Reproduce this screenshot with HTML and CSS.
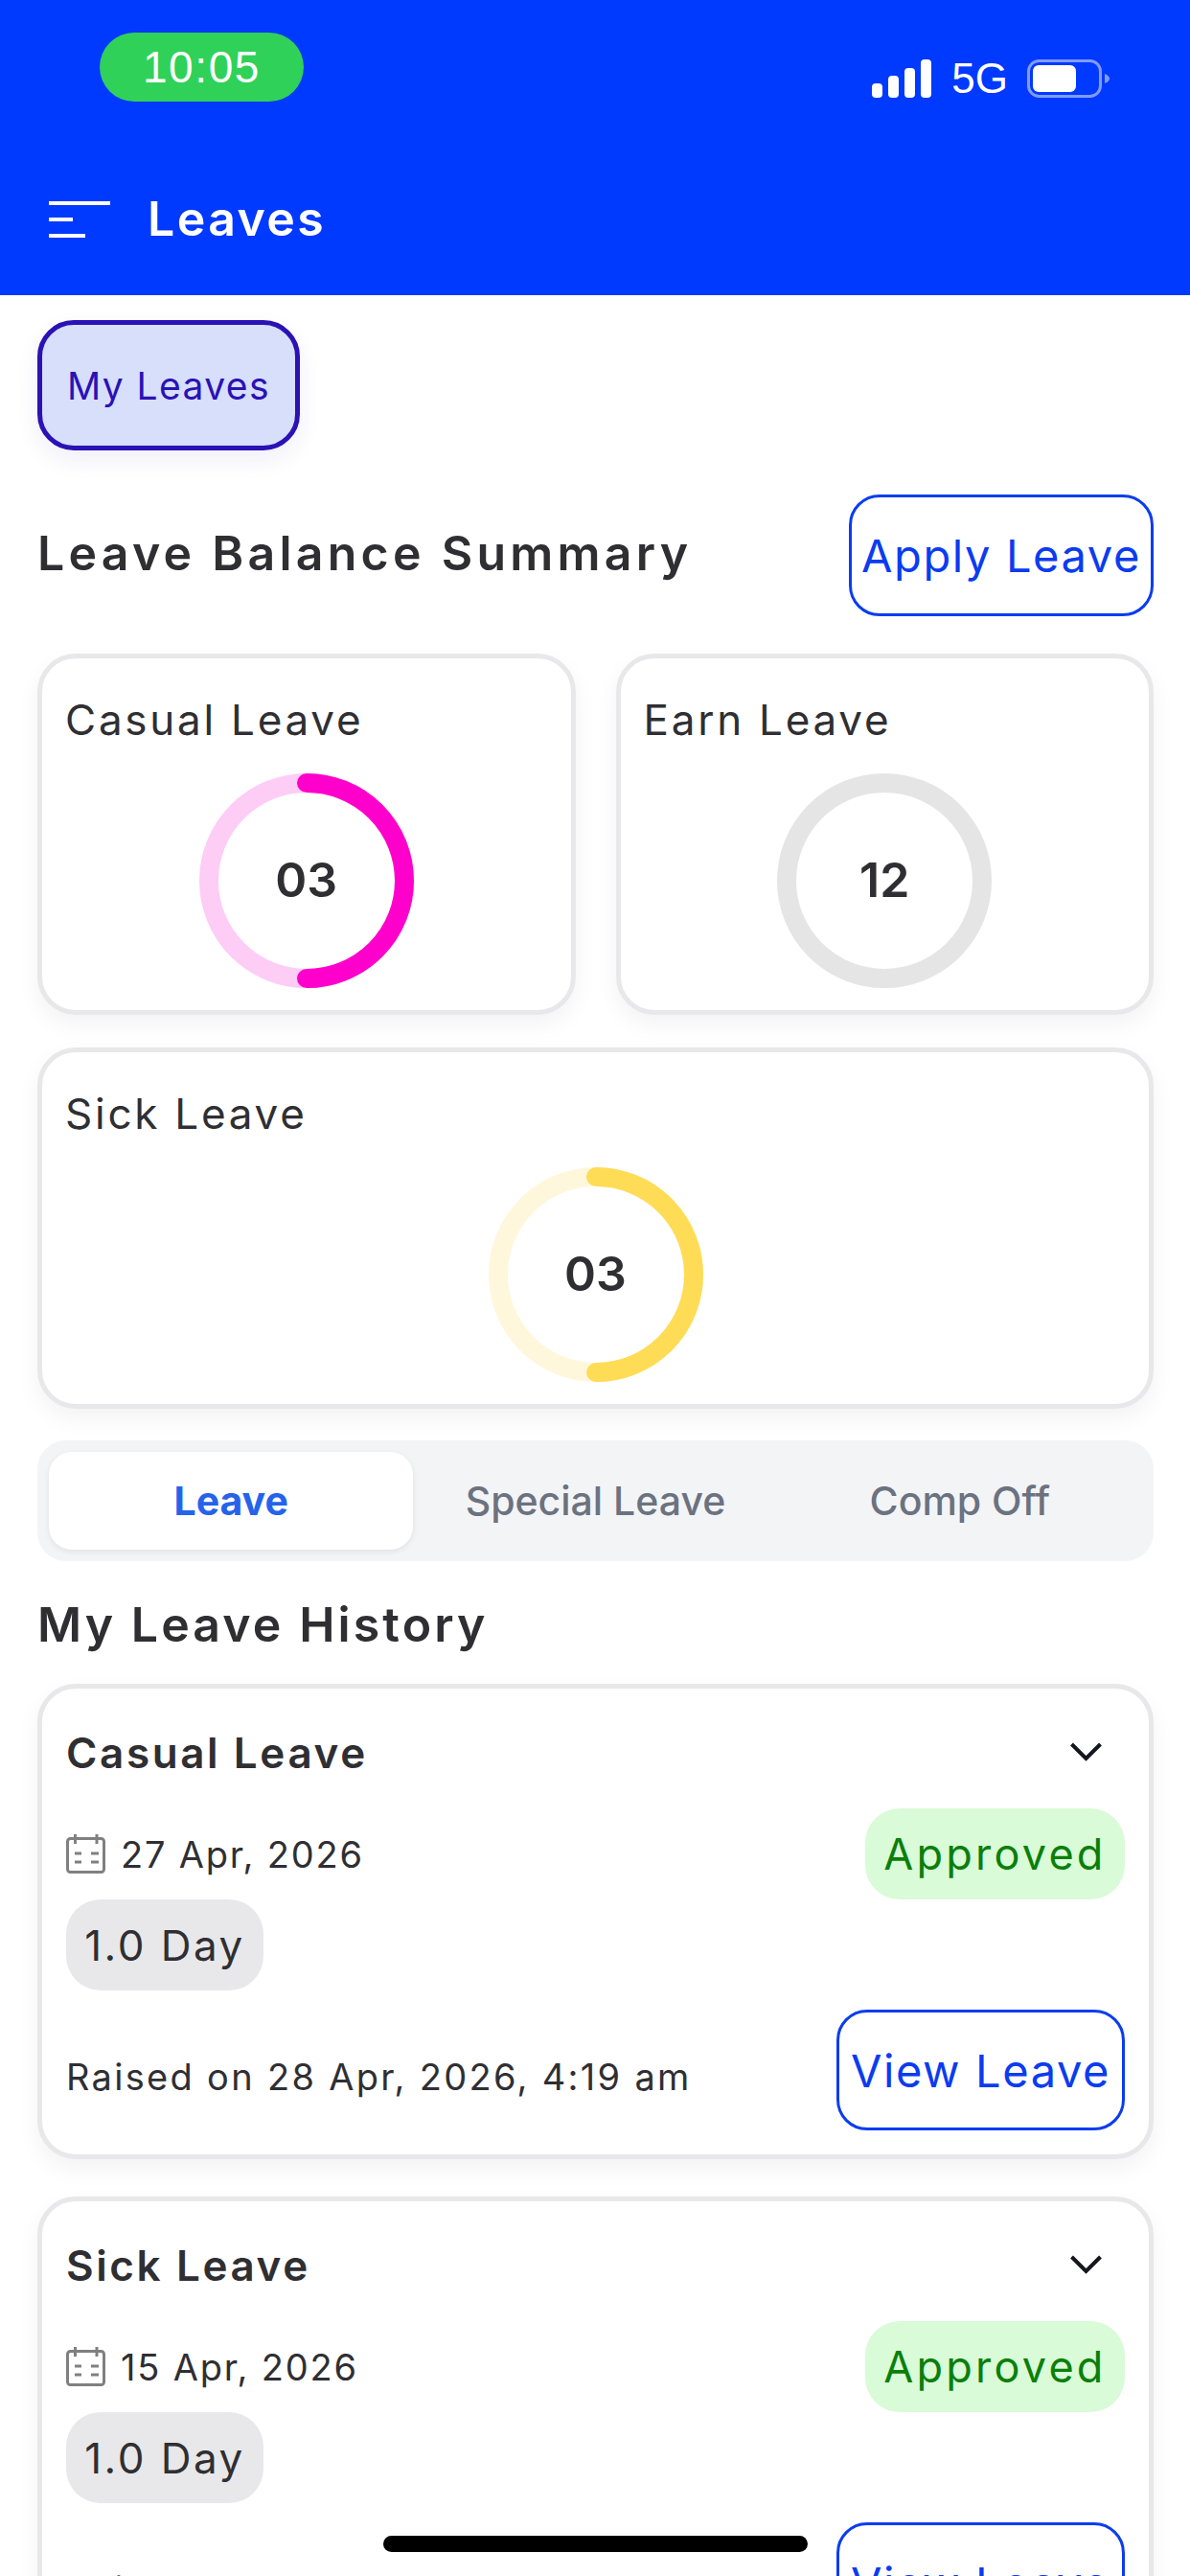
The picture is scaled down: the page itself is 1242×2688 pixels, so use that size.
FILE: index.html
```html
<!DOCTYPE html>
<html lang="en">
<head>
<meta charset="UTF-8">
<meta name="viewport" content="width=device-width, initial-scale=1.0">
<title>Leaves</title>
<link rel="stylesheet" href="styles.css">
</head>
<body>
<div class="screen">

    <header class="topbar">
        <div class="status">
            <span class="time">10:05</span>
            <div class="status-right">
                <svg class="signal" width="62" height="40" viewBox="0 0 62 40">
                    <rect x="0" y="25" width="11" height="15" rx="4"/>
                    <rect x="17" y="17" width="11" height="23" rx="4"/>
                    <rect x="34" y="9" width="11" height="31" rx="4"/>
                    <rect x="51" y="0" width="11" height="40" rx="4"/>
                </svg>
                <span class="net">5G</span>
                <svg class="battery" width="86" height="40" viewBox="0 0 86 40">
                    <rect x="1.5" y="1.5" width="75" height="37" rx="11" fill="none" stroke="#fff" stroke-opacity=".5" stroke-width="3"/>
                    <rect x="6" y="6" width="45" height="28" rx="6" fill="#fff"/>
                    <path d="M81 15c3 1 5 3 5 5s-2 4-5 5z" fill="#fff" fill-opacity=".5"/>
                </svg>
            </div>
        </div>
        <div class="titlebar">
            <svg class="menu" width="64" height="38" viewBox="0 0 64 38">
                <rect x="0" y="0" width="64" height="4"/>
                <rect x="0" y="17" width="25" height="4"/>
                <rect x="0" y="34" width="38" height="4"/>
            </svg>
            <h1>Leaves</h1>
        </div>
    </header>

    <main class="content">
        <div class="subtabs">
            <button class="subtab">My Leaves</button>
        </div>

        <div class="summary-head">
            <h2 class="summary-title">Leave Balance Summary</h2>
            <a class="outline-btn apply">Apply Leave</a>
        </div>

        <div class="balance-grid">
            <section class="balance-card">
                <div class="balance-name">Casual Leave</div>
                <div class="donut">
                    <svg width="224" height="224" viewBox="0 0 224 224">
                        <circle cx="112" cy="112" r="102" fill="none" stroke="#fdcdf6" stroke-width="20"/>
                        <path d="M112 10a102 102 0 0 1 0 204" fill="none" stroke="#ff00cc" stroke-width="20" stroke-linecap="round"/>
                    </svg>
                    <span class="donut-num">03</span>
                </div>
            </section>
            <section class="balance-card">
                <div class="balance-name">Earn Leave</div>
                <div class="donut">
                    <svg width="224" height="224" viewBox="0 0 224 224">
                        <circle cx="112" cy="112" r="102" fill="none" stroke="#e5e5e5" stroke-width="20"/>
                    </svg>
                    <span class="donut-num">12</span>
                </div>
            </section>
            <section class="balance-card wide">
                <div class="balance-name">Sick Leave</div>
                <div class="donut">
                    <svg width="224" height="224" viewBox="0 0 224 224">
                        <circle cx="112" cy="112" r="102" fill="none" stroke="#fff7dc" stroke-width="20"/>
                        <path d="M112 10a102 102 0 0 1 0 204" fill="none" stroke="#ffdc55" stroke-width="20" stroke-linecap="round"/>
                    </svg>
                    <span class="donut-num">03</span>
                </div>
            </section>
        </div>

        <div class="segment">
            <div class="segment-item active">Leave</div>
            <div class="segment-item">Special Leave</div>
            <div class="segment-item">Comp Off</div>
        </div>

        <h2 class="history-title">My Leave History</h2>

        <section class="leave-card">
            <div class="leave-top">
                <div class="leave-type">Casual Leave</div>
                <svg class="chevron" width="33" height="20" viewBox="0 0 33 20"><path d="M1.5 2l15 15 15-15"/></svg>
            </div>
            <div class="leave-row">
                <div class="leave-date">
                    <svg class="cal" width="41" height="41" viewBox="0 0 41 41">
                        <rect x="1.5" y="4.5" width="38" height="35" rx="3"/>
                        <path d="M9.5 0v10M32 0v10M9 20h7M26 20h8M9 29h7M26 29h8"/>
                    </svg>
                    <span>27 Apr, 2026</span>
                </div>
                <span class="status-pill">Approved</span>
            </div>
            <div class="day-pill">1.0 Day</div>
            <div class="leave-foot">
                <span class="raised">Raised on 28 Apr, 2026, 4:19 am</span>
                <a class="outline-btn view">View Leave</a>
            </div>
        </section>

        <section class="leave-card">
            <div class="leave-top">
                <div class="leave-type">Sick Leave</div>
                <svg class="chevron" width="33" height="20" viewBox="0 0 33 20"><path d="M1.5 2l15 15 15-15"/></svg>
            </div>
            <div class="leave-row">
                <div class="leave-date">
                    <svg class="cal" width="41" height="41" viewBox="0 0 41 41">
                        <rect x="1.5" y="4.5" width="38" height="35" rx="3"/>
                        <path d="M9.5 0v10M32 0v10M9 20h7M26 20h8M9 29h7M26 29h8"/>
                    </svg>
                    <span>15 Apr, 2026</span>
                </div>
                <span class="status-pill">Approved</span>
            </div>
            <div class="day-pill">1.0 Day</div>
            <div class="leave-foot">
                <span class="raised">Raised on 16 Apr, 2026, 9:02 am</span>
                <a class="outline-btn view">View Leave</a>
            </div>
        </section>
    </main>

    <div class="home-bar"></div>
</div>
</body>
</html>
```

FILE: styles.css
```css
* {
    box-sizing: border-box;
}
html, body {
    margin: 0;
    padding: 0;
    background: #fff;
}
.screen {
    position: relative;
    width: 1242px;
    height: 2688px;
    overflow: hidden;
    font-family: "Inter", "Liberation Sans", sans-serif;
    color: #2f2f33;
}

/* blue header */
.topbar {
    height: 308px;
    background: #0039ff;
    color: #fff;
    padding-top: 34px;
}
.status {
    display: flex;
    justify-content: space-between;
    padding: 0 84px 0 104px;
}
.time {
    width: 213px;
    height: 72px;
    border-radius: 36px;
    background: #30d158;
    display: flex;
    align-items: center;
    justify-content: center;
    font-family: "Liberation Sans", sans-serif;
    font-size: 46px;
    letter-spacing: 1.6px;
}
.status-right {
    display: flex;
    align-items: center;
    height: 40px;
    margin-top: 28px;
}
.signal {
    fill: #fff;
}
.net {
    font-family: "Liberation Sans", sans-serif;
    font-size: 44px;
    line-height: 40px;
    margin: 0 20px 0 21px;
}
.titlebar {
    display: flex;
    align-items: center;
    padding-left: 51px;
    margin-top: 104px;
    height: 38px;
}
.menu {
    fill: #fff;
}
h1 {
    margin: 0 0 3px 39px;
    font-size: 50px;
    font-weight: 600;
    letter-spacing: 2.4px;
}

.content {
    padding: 26px 38px 0 39px;
}
.subtabs {
    display: flex;
}
.subtab {
    width: 274px;
    height: 136px;
    border: 5px solid #2a12b5;
    border-radius: 38px;
    background: #d7dffb;
    color: #2a12b5;
    font-family: inherit;
    font-size: 39px;
    letter-spacing: 1.4px;
    box-shadow: 0 10px 24px rgba(40, 30, 160, .07);
    padding: 0;
}
.summary-head {
    display: flex;
    justify-content: space-between;
    align-items: center;
    margin-top: 46px;
}
h2 {
    margin: 0;
    font-size: 50px;
    font-weight: 600;
}
.summary-title {
    letter-spacing: 4.25px;
    margin-bottom: 5px;
}
.outline-btn {
    display: flex;
    align-items: center;
    justify-content: center;
    border: 3px solid #0a3cf0;
    border-radius: 32px;
    color: #0a3cf0;
    font-size: 47px;
    letter-spacing: 1.6px;
}
.apply {
    width: 318px;
    height: 127px;
}

.balance-grid {
    display: grid;
    grid-template-columns: 1fr 1fr;
    column-gap: 42px;
    row-gap: 34px;
    margin-top: 39px;
}
.balance-card {
    height: 377px;
    border: 5px solid #e8e8ea;
    border-radius: 40px;
    background: #fff;
    box-shadow: 0 10px 24px rgba(0, 0, 0, .05);
    padding: 37px 24px 0;
}
.balance-card.wide {
    grid-column: 1 / 3;
}
.balance-name {
    font-size: 44px;
    line-height: 54px;
    letter-spacing: 2.75px;
}
.donut {
    display: grid;
    justify-content: center;
    align-items: center;
    margin-top: 29px;
}
.donut svg, .donut-num {
    grid-area: 1 / 1;
}
.donut svg {
    display: block;
}
.donut-num {
    text-align: center;
    font-size: 50px;
    font-weight: 600;
    margin-bottom: 3px;
}

.segment {
    display: flex;
    height: 126px;
    margin-top: 33px;
    padding: 12px 12px;
    border-radius: 30px;
    background: #f3f4f6;
}
.segment-item {
    flex: 1;
    display: flex;
    align-items: center;
    justify-content: center;
    font-size: 41px;
    font-weight: 500;
    color: #6b7280;
    border-radius: 24px;
}
.segment-item.active {
    background: #fff;
    color: #2563eb;
    font-weight: 700;
    box-shadow: 0 2px 6px rgba(0, 0, 0, .08);
}
.history-title {
    margin-top: 34px;
    line-height: 64px;
    letter-spacing: 3.1px;
}

.leave-card {
    height: 496px;
    margin-top: 30px;
    margin-bottom: 39px;
    padding: 0 25px;
    border: 5px solid #e8e8ea;
    border-radius: 40px;
    background: #fff;
    box-shadow: 0 10px 24px rgba(0, 0, 0, .05);
}
.leave-card + .leave-card {
    margin-top: 0;
}
.leave-top {
    display: flex;
    justify-content: space-between;
    align-items: center;
    height: 125px;
    padding: 9px 24px 0 0;
}
.leave-type {
    font-size: 44px;
    font-weight: 600;
    letter-spacing: 2.6px;
}
.chevron {
    fill: none;
    stroke: #16161f;
    stroke-width: 4;
    margin-bottom: 2px;
}
.leave-row {
    display: flex;
    justify-content: space-between;
    align-items: center;
}
.leave-date {
    display: flex;
    align-items: center;
    font-size: 38px;
    letter-spacing: 1.8px;
}
.cal {
    fill: none;
    stroke: #808080;
    stroke-width: 3;
    margin-right: 16px;
}
.status-pill {
    width: 271px;
    height: 95px;
    border-radius: 36px;
    background: #d9fbd7;
    color: #0a7f0a;
    display: flex;
    align-items: center;
    justify-content: center;
    font-size: 45px;
    letter-spacing: 3.2px;
}
.day-pill {
    width: 206px;
    height: 95px;
    border-radius: 36px;
    background: #e8e8ea;
    display: flex;
    align-items: center;
    justify-content: center;
    font-size: 44px;
    letter-spacing: 2.5px;
}
.leave-foot {
    display: flex;
    justify-content: space-between;
    align-items: center;
    margin-top: 20px;
}
.raised {
    font-size: 38px;
    letter-spacing: 2.3px;
    margin-top: 14px;
}
.view {
    width: 301px;
    height: 126px;
}

/* iphone home indicator sits over the page */
.home-bar {
    position: absolute;
    left: 400px;
    top: 2646px;
    width: 443px;
    height: 17px;
    border-radius: 9px;
    background: #000;
}
```
